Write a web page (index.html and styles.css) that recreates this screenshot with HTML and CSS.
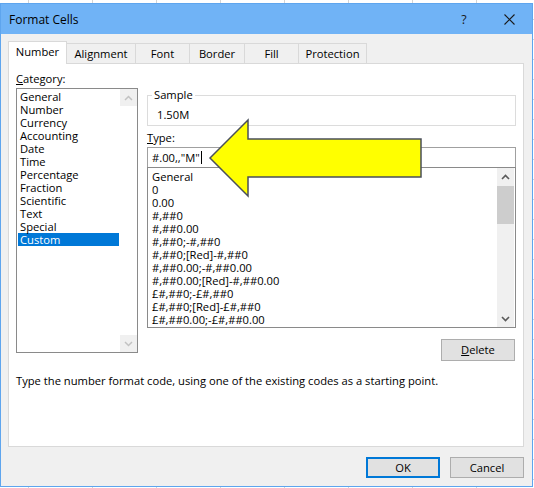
FILE: index.html
```html
<!DOCTYPE html>
<html>
<head>
<meta charset="utf-8">
<title>Format Cells</title>
<link rel="stylesheet" href="styles.css">
</head>
<body>
<div class="screen">
  <div class="dialog">
    <div class="titlebar">
      <span class="title">Format Cells</span>
      <div class="controls">
        <span class="help">?</span>
        <span class="closebtn">
          <svg width="11" height="11" viewBox="0 0 11 11"><path d="M0.5 0.5 L10.5 10.5 M10.5 0.5 L0.5 10.5" stroke="#1a1a1a" stroke-width="1.1" fill="none"/></svg>
        </span>
      </div>
    </div>
    <div class="body">
      <div class="tabs">
        <div class="tab active">Number</div>
        <div class="tab">Alignment</div>
        <div class="tab">Font</div>
        <div class="tab">Border</div>
        <div class="tab">Fill</div>
        <div class="tab">Protection</div>
      </div>
      <div class="panel">
        <div class="columns">
          <div class="cat-col">
            <div class="label"><u>C</u>ategory:</div>
            <div class="listbox cat-list">
              <ul class="items">
                <li>General</li>
                <li>Number</li>
                <li>Currency</li>
                <li>Accounting</li>
                <li>Date</li>
                <li>Time</li>
                <li>Percentage</li>
                <li>Fraction</li>
                <li>Scientific</li>
                <li>Text</li>
                <li>Special</li>
                <li class="selected">Custom</li>
              </ul>
              <div class="scrollbar disabled">
                <div class="sb-btn"><svg width="9" height="6" viewBox="0 0 9 6"><path d="M1 5 L4.5 1.5 L8 5" stroke="#c2c2c2" stroke-width="1.5" fill="none"/></svg></div>
                <div class="sb-btn"><svg width="9" height="6" viewBox="0 0 9 6"><path d="M1 1 L4.5 4.5 L8 1" stroke="#c2c2c2" stroke-width="1.5" fill="none"/></svg></div>
              </div>
            </div>
          </div>
          <div class="main-col">
            <fieldset class="sample">
              <legend>Sample</legend>
              <div class="sample-value">1.50M</div>
            </fieldset>
            <div class="label type-label"><u>T</u>ype:</div>
            <div class="type-input">#.00,,&quot;M&quot;<span class="caret"></span></div>
            <div class="listbox type-list">
              <ul class="items codes">
                <li>General</li>
                <li>0</li>
                <li>0.00</li>
                <li>#,##0</li>
                <li>#,##0.00</li>
                <li>#,##0;-#,##0</li>
                <li>#,##0;[Red]-#,##0</li>
                <li>#,##0.00;-#,##0.00</li>
                <li>#,##0.00;[Red]-#,##0.00</li>
                <li>£#,##0;-£#,##0</li>
                <li>£#,##0;[Red]-£#,##0</li>
                <li>£#,##0.00;-£#,##0.00</li>
              </ul>
              <div class="scrollbar active-sb">
                <div class="sb-btn"><svg width="9" height="6" viewBox="0 0 9 6"><path d="M1 5 L4.5 1.5 L8 5" stroke="#5a5a5a" stroke-width="1.6" fill="none"/></svg></div>
                <div class="sb-track"><div class="sb-thumb"></div></div>
                <div class="sb-btn"><svg width="9" height="6" viewBox="0 0 9 6"><path d="M1 1 L4.5 4.5 L8 1" stroke="#5a5a5a" stroke-width="1.6" fill="none"/></svg></div>
              </div>
            </div>
            <div class="delete-row"><button class="btn delete"><u>D</u>elete</button></div>
          </div>
        </div>
        <p class="hint">Type the number format code, using one of the existing codes as a starting point.</p>
      </div>
      <div class="footer">
        <button class="btn default">OK</button>
        <button class="btn">Cancel</button>
      </div>
    </div>
  </div>
  <svg class="arrow" width="216" height="82" viewBox="0 0 216 82">
    <polygon points="2,40 40,2 40,21 213,21 213,59 40,59 40,78" fill="#ffff00" stroke="#4a4f5a" stroke-width="1.5" stroke-linejoin="miter"/>
  </svg>
</div>
</body>
</html>
```

FILE: styles.css
```css
* {
  box-sizing: border-box;
  margin: 0;
  padding: 0;
}

html, body {
  width: 534px;
  height: 488px;
  overflow: hidden;
}

body {
  font-family: "Open Sans", "Noto Sans", sans-serif;
  font-size: 11.2px;
  color: #000;
  background: #fff;
}

.screen {
  position: relative;
  width: 534px;
  height: 488px;
  padding-top: 3px;
  background-color: #fff;
  background-image:
    repeating-linear-gradient(90deg, transparent 0 28px, #d4d4d4 28px 29px, transparent 29px 64px),
    repeating-linear-gradient(180deg, transparent 0 19px, #d4d4d4 19px 20px);
}

.dialog {
  width: 533px;
  height: 484px;
  border: 1px solid #5ea5ee;
  background: #f0f0f0;
  display: flex;
  flex-direction: column;
}

.titlebar {
  height: 30px;
  flex: none;
  background: #70b3f6;
  display: flex;
  align-items: center;
  justify-content: space-between;
  padding-left: 8px;
}

.title {
  font-size: 12px;
}

.controls {
  display: flex;
  align-items: center;
}

.help {
  width: 16px;
  text-align: center;
  font-size: 12.5px;
  margin-right: 14px;
  color: #1a1a1a;
}

.closebtn {
  width: 46px;
  height: 30px;
  display: flex;
  align-items: center;
  justify-content: center;
}

.body {
  flex: 1;
  padding: 7px 8px 0 7px;
  display: flex;
  flex-direction: column;
}

.tabs {
  display: grid;
  grid-template-columns: 59px 69px 54px 55px 54px 68px;
  height: 22px;
  align-items: end;
  position: relative;
  z-index: 1;
}

.tab {
  height: 20px;
  border: 1px solid #d9d9d9;
  border-left: none;
  border-bottom: none;
  background: #f0f0f0;
  display: flex;
  align-items: center;
  justify-content: center;
  white-space: nowrap;
}

.tab.active {
  height: 23px;
  background: #fff;
  border-left: 1px solid #d9d9d9;
  margin-bottom: -1px;
  padding-bottom: 3px;
}

.panel {
  height: 384px;
  flex: none;
  background: #fff;
  border: 1px solid #d9d9d9;
  padding: 8px 7px 0 7px;
}

.columns {
  display: flex;
  gap: 9px;
  align-items: flex-start;
}

.cat-col {
  width: 122px;
  flex: none;
}

.label {
  line-height: 14px;
  height: 14px;
  white-space: nowrap;
}

.listbox {
  border: 1px solid #8a8a8a;
  background: #fff;
  display: flex;
  overflow: hidden;
}

.cat-list {
  margin-top: 2px;
  height: 265px;
}

.items {
  flex: 1;
  list-style: none;
  padding-top: 1px;
  margin: 0 1px;
  overflow: hidden;
}

.items li {
  height: 13px;
  line-height: 13px;
  padding-left: 2px;
  white-space: nowrap;
}

.items li.selected {
  background: #0078d7;
  color: #fff;
}

.codes {
  margin: 0;
  padding: 2px 0 0 4px;
}

.codes li {
  padding-left: 0;
}

.scrollbar {
  width: 17px;
  flex: none;
  display: flex;
  flex-direction: column;
  justify-content: space-between;
}

.sb-btn {
  height: 17px;
  display: flex;
  align-items: center;
  justify-content: center;
  background: #f0f0f0;
}

.active-sb {
  background: #f0f0f0;
  margin-right: 1px;
}

.sb-track {
  flex: 1;
  padding-top: 1px;
}

.sb-thumb {
  height: 38px;
  background: #cdcdcd;
}

.main-col {
  width: 369px;
  flex: none;
}

.sample {
  margin-top: 16px;
  border: 1px solid #dcdcdc;
  padding: 0 0 3px 0;
  min-inline-size: 0;
}

.sample legend {
  margin-left: 4px;
  padding: 0 2px;
  line-height: 14px;
}

.sample-value {
  padding: 6px 0 0 9px;
  line-height: 14px;
}

.type-label {
  margin-top: 5px;
}

.type-input {
  margin-top: 2px;
  height: 20px;
  border: 1px solid #a0a0a0;
  border-bottom: none;
  padding-left: 4px;
  line-height: 19px;
  display: flex;
  align-items: center;
  white-space: nowrap;
}

.caret {
  display: inline-block;
  width: 1px;
  height: 13px;
  background: #000;
  margin-left: 1px;
}

.type-list {
  height: 161px;
}

.delete-row {
  margin-top: 11px;
  display: flex;
  justify-content: flex-end;
  padding-right: 1px;
}

.btn {
  font: inherit;
  color: #000;
  width: 74px;
  height: 21px;
  background: #e1e1e1;
  border: 1px solid #adadad;
  line-height: 18px;
  text-align: center;
}

.delete {
  height: 22px;
}

.btn.default {
  border: 2px solid #0078d7;
}

.hint {
  margin-top: 13px;
  line-height: 14px;
  white-space: nowrap;
}

.footer {
  height: 39px;
  flex: none;
  display: flex;
  justify-content: flex-end;
  gap: 10px;
  padding-top: 10px;
}

.arrow {
  position: absolute;
  left: 208px;
  top: 118px;
}
```
